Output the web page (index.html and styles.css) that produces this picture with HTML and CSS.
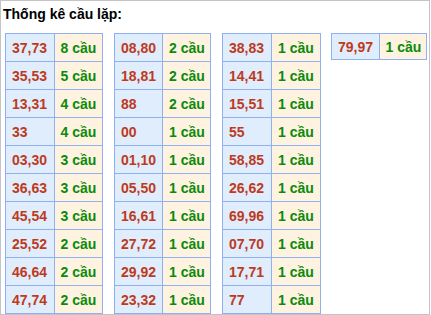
FILE: index.html
```html
<!DOCTYPE html>
<html>
<head>
<meta charset="utf-8">
<link rel="stylesheet" href="styles.css">
</head>
<body>
<div class="box">
  <div class="title">Thống kê cầu lặp:</div>
  <div class="tables">
    <table class="tk t1">
      <tr><td class="num">37,73</td><td class="cnt">8 cầu</td></tr>
      <tr><td class="num">35,53</td><td class="cnt">5 cầu</td></tr>
      <tr><td class="num">13,31</td><td class="cnt">4 cầu</td></tr>
      <tr><td class="num">33</td><td class="cnt">4 cầu</td></tr>
      <tr><td class="num">03,30</td><td class="cnt">3 cầu</td></tr>
      <tr><td class="num">36,63</td><td class="cnt">3 cầu</td></tr>
      <tr><td class="num">45,54</td><td class="cnt">3 cầu</td></tr>
      <tr><td class="num">25,52</td><td class="cnt">2 cầu</td></tr>
      <tr><td class="num">46,64</td><td class="cnt">2 cầu</td></tr>
      <tr><td class="num">47,74</td><td class="cnt">2 cầu</td></tr>
    </table>
    <table class="tk t2">
      <tr><td class="num">08,80</td><td class="cnt">2 cầu</td></tr>
      <tr><td class="num">18,81</td><td class="cnt">2 cầu</td></tr>
      <tr><td class="num">88</td><td class="cnt">2 cầu</td></tr>
      <tr><td class="num">00</td><td class="cnt">1 cầu</td></tr>
      <tr><td class="num">01,10</td><td class="cnt">1 cầu</td></tr>
      <tr><td class="num">05,50</td><td class="cnt">1 cầu</td></tr>
      <tr><td class="num">16,61</td><td class="cnt">1 cầu</td></tr>
      <tr><td class="num">27,72</td><td class="cnt">1 cầu</td></tr>
      <tr><td class="num">29,92</td><td class="cnt">1 cầu</td></tr>
      <tr><td class="num">23,32</td><td class="cnt">1 cầu</td></tr>
    </table>
    <table class="tk t3">
      <tr><td class="num">38,83</td><td class="cnt">1 cầu</td></tr>
      <tr><td class="num">14,41</td><td class="cnt">1 cầu</td></tr>
      <tr><td class="num">15,51</td><td class="cnt">1 cầu</td></tr>
      <tr><td class="num">55</td><td class="cnt">1 cầu</td></tr>
      <tr><td class="num">58,85</td><td class="cnt">1 cầu</td></tr>
      <tr><td class="num">26,62</td><td class="cnt">1 cầu</td></tr>
      <tr><td class="num">69,96</td><td class="cnt">1 cầu</td></tr>
      <tr><td class="num">07,70</td><td class="cnt">1 cầu</td></tr>
      <tr><td class="num">17,71</td><td class="cnt">1 cầu</td></tr>
      <tr><td class="num">77</td><td class="cnt">1 cầu</td></tr>
    </table>
    <table class="tk t4">
      <tr><td class="num">79,97</td><td class="cnt">1 cầu</td></tr>
    </table>
  </div>
</div>
</body>
</html>
```
FILE: styles.css
```css
html, body {
  margin: 0;
  padding: 0;
  background: #ffffff;
}
.box {
  box-sizing: border-box;
  width: 430px;
  height: 315px;
  border: 1px solid #c4c4c4;
  font-family: "Liberation Sans", Arial, sans-serif;
  overflow: hidden;
}
.title {
  font-weight: bold;
  font-size: 14px;
  line-height: 16px;
  color: #000;
  padding: 5px 0 0 2px;
  height: 21px;
}
.tables {
  display: flex;
  align-items: flex-start;
  gap: 11px;
  margin-top: 6px;
  margin-left: 4px;
}
.tk {
  border-collapse: collapse;
  table-layout: fixed;
  font-size: 14px;
  font-weight: bold;
}
.t1 { width: 98px; }
.t2 { width: 97px; }
.t3 { width: 99px; }
.t4 { width: 96px; margin-left: -1px; }
.tk td {
  border: 1px solid #8fb1f2;
  height: 27px;
  padding: 0 0 0 6px;
  vertical-align: middle;
  white-space: nowrap;
  width: 50%;
}
.t4 td { height: 25px; }
.tk td.num {
  background: #e0edfd;
  color: #be3a1c;
}
.tk td.cnt {
  background: #fef3e1;
  color: #0b8a0b;
}
```
